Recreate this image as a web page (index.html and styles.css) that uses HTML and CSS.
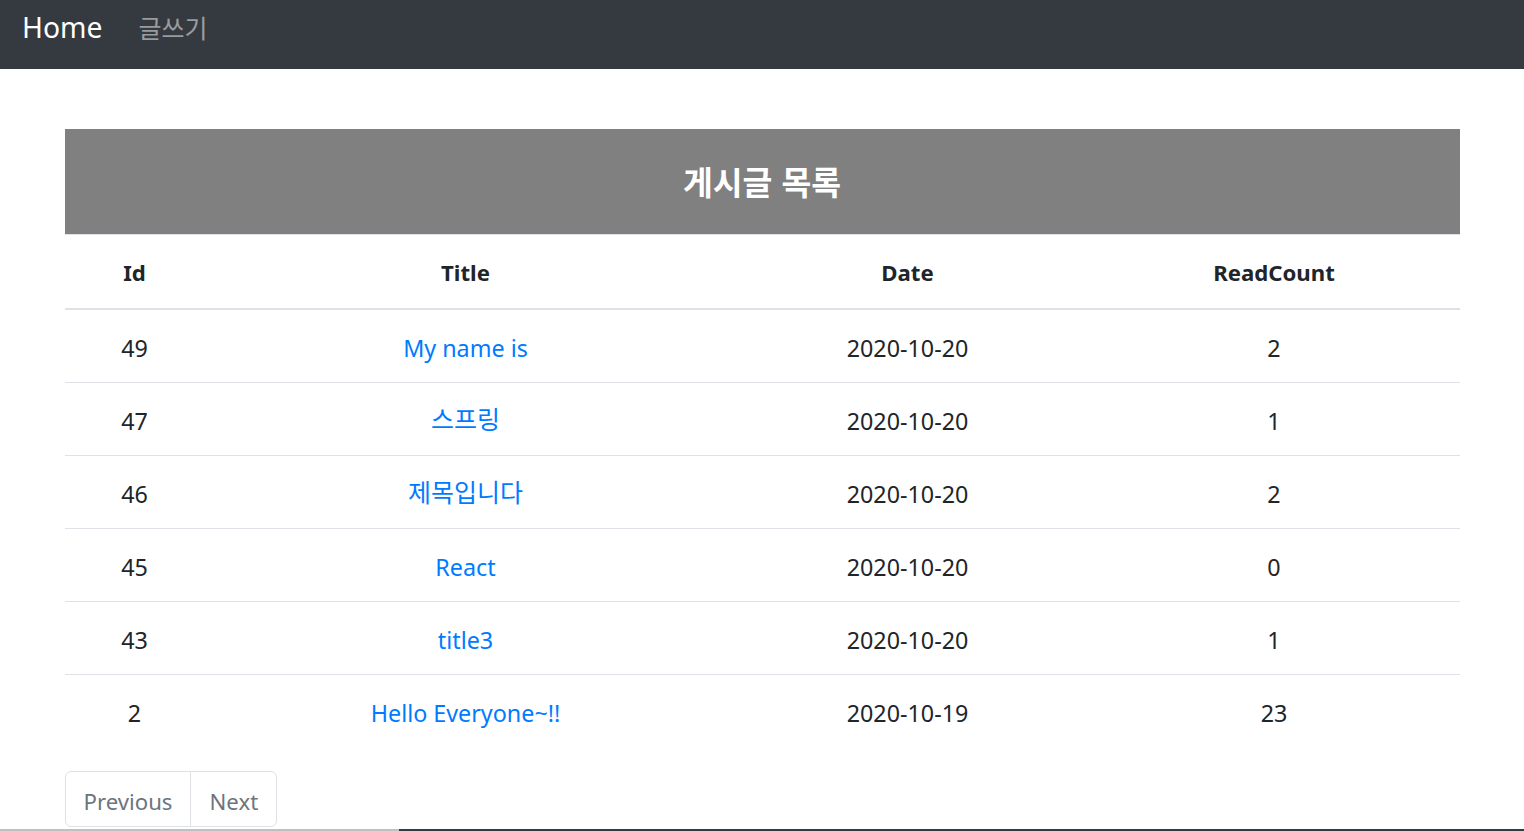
FILE: index.html
```html
<!DOCTYPE html>
<html lang="ko">
<head>
<meta charset="utf-8">
<title>게시글 목록</title>
<link rel="stylesheet" href="styles.css">
</head>
<body>
<nav class="navbar">
  <a class="brand" href="#">Home</a>
  <a class="nav-link" href="#">글쓰기</a>
</nav>
<main class="container">
  <div class="board-title">게시글 목록</div>
  <table class="table">
    <thead>
      <tr>
        <th class="c-id">Id</th>
        <th class="c-title">Title</th>
        <th class="c-date">Date</th>
        <th class="c-count">ReadCount</th>
      </tr>
    </thead>
    <tbody>
      <tr><td>49</td><td><a href="#">My name is</a></td><td>2020-10-20</td><td>2</td></tr>
      <tr><td>47</td><td><a class="ko" href="#">스프링</a></td><td>2020-10-20</td><td>1</td></tr>
      <tr><td>46</td><td><a class="ko" href="#">제목입니다</a></td><td>2020-10-20</td><td>2</td></tr>
      <tr><td>45</td><td><a href="#">React</a></td><td>2020-10-20</td><td>0</td></tr>
      <tr><td>43</td><td><a href="#">title3</a></td><td>2020-10-20</td><td>1</td></tr>
      <tr><td>2</td><td><a href="#">Hello Everyone~!!</a></td><td>2020-10-19</td><td>23</td></tr>
    </tbody>
  </table>
  <ul class="pagination">
    <li class="page-item"><a class="page-link" href="#">Previous</a></li>
    <li class="page-item"><a class="page-link" href="#">Next</a></li>
  </ul>
</main>
<div class="bottom-bar"><span class="seg-light"></span><span class="seg-dark"></span></div>
</body>
</html>
```
FILE: styles.css
```css
* { box-sizing: border-box; }
html, body { margin: 0; padding: 0; }
body {
  font-family: "Noto Sans", "Noto Sans CJK KR", sans-serif;
  font-size: 23.3px;
  line-height: 1.5;
  color: #212529;
  background: #fff;
  overflow: hidden;
  height: 831px;
}
a { text-decoration: none; }

.navbar {
  height: 69px;
  background: #343a40;
  display: flex;
  align-items: baseline;
  padding: 5px 22px 0;
}
.brand {
  color: #fff;
  font-size: 28.3px;
  line-height: 45px;
  margin-right: 36px;
}
.nav-link {
  color: rgba(255, 255, 255, 0.5);
  font-family: "Noto Sans CJK KR", "Noto Sans", sans-serif;
  font-size: 25px;
  line-height: 36px;
}

.container {
  width: 1395px;
  margin: 60px auto 0;
}
.board-title {
  height: 105px;
  background: #808080;
  color: #fff;
  font-family: "Noto Sans CJK KR", "Noto Sans", sans-serif;
  font-weight: 700;
  font-size: 32.4px;
  display: flex;
  align-items: center;
  justify-content: center;
}

.table {
  width: 100%;
  border-collapse: collapse;
  margin-bottom: 23px;
  table-layout: fixed;
}
.table th, .table td {
  text-align: center;
  border-top: 1px solid #dee2e6;
  line-height: 36px;
  height: 73px;
  white-space: nowrap;
}
.table th {
  font-weight: 700;
  font-size: 22.2px;
  padding: 20px 18px 17px;
}
.table td { padding: 20px 18px 16px; }
.table thead th { border-bottom: 2px solid #dee2e6; }
.table td a { color: #007bff; }
.table td a.ko {
  font-family: "Noto Sans CJK KR", sans-serif;
  font-size: 25px;
  line-height: 20px;
  position: relative;
  top: -1px;
}
.c-id { width: 140px; }
.c-title { width: 522px; }
.c-date { width: 362px; }
.c-count { width: 371px; }

.pagination {
  display: flex;
  list-style: none;
  margin: 0;
  padding: 0;
}
.page-link {
  display: block;
  padding: 15px 18px 9px;
  line-height: 30px;
  font-size: 22.2px;
  color: #6c757d;
  border: 1px solid #dee2e6;
  background: #fff;
}
.page-item + .page-item .page-link { margin-left: -1px; }
.page-item:first-child .page-link { border-radius: 6px 0 0 6px; }
.page-item:last-child .page-link { border-radius: 0 6px 6px 0; }

.bottom-bar {
  position: fixed;
  left: 0;
  right: 0;
  bottom: 0;
  height: 2px;
  display: flex;
}
.seg-light { width: 399px; background: #c0c0c0; }
.seg-dark { flex: 1; background: #2f3d42; }
```
